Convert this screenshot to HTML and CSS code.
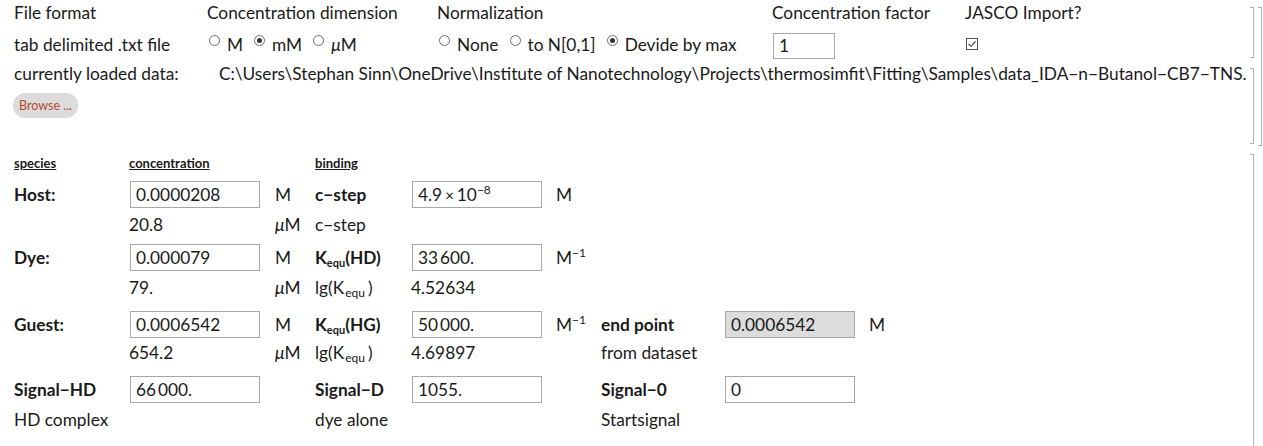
FILE: index.html
```html
<!DOCTYPE html>
<html>
<head>
<meta charset="utf-8">
<link rel="stylesheet" href="styles.css">
</head>
<body>
<div class="page">
  <div class="group">
    <div class="cell cell-a">
      <div class="top-grid">
        <div class="hdr">File format</div>
        <div class="hdr">Concentration dimension</div>
        <div class="hdr">Normalization</div>
        <div class="hdr">Concentration factor</div>
        <div class="hdr">JASCO Import?</div>

        <div class="ctl">tab delimited .txt file</div>
        <div class="ctl radios">
          <span class="radio"></span><span class="rlabel">M</span>
          <span class="radio on"></span><span class="rlabel">mM</span>
          <span class="radio"></span><span class="rlabel"><i>μ</i>M</span>
        </div>
        <div class="ctl radios">
          <span class="radio"></span><span class="rlabel">None</span>
          <span class="radio"></span><span class="rlabel">to N[0,1]</span>
          <span class="radio on"></span><span class="rlabel">Devide by max</span>
        </div>
        <div class="ctl"><span class="field small">1</span></div>
        <div class="ctl">
          <svg class="check" width="12" height="12" viewBox="0 0 12 12"><rect x="0.5" y="0.5" width="11" height="11" fill="#fff" stroke="#555"/><polyline points="2.5,6 5,8.3 9.5,3.5" fill="none" stroke="#444" stroke-width="1.1"/></svg>
        </div>
      </div>
    </div>
    <div class="cell cell-b">
      <div class="path-row">
        <span class="path-label">currently loaded data:</span>
        <span class="path">C:\Users\Stephan Sinn\OneDrive\Institute of Nanotechnology\Projects\thermosimfit\Fitting\Samples\data_IDA−n−Butanol−CB7−TNS.txt</span>
      </div>
      <div class="browse">Browse ...</div>
    </div>
  </div>

  <div class="cell cell-c">
    <div class="grid">
      <div class="colhead">species</div>
      <div class="colhead">concentration</div>
      <div></div>
      <div class="colhead">binding</div>
      <div></div><div></div><div></div><div></div><div></div>

      <div class="b">Host:</div>
      <div><span class="field">0.0000208</span></div>
      <div>M</div>
      <div class="b">c−step</div>
      <div><span class="field">4.9<span class="times">×</span>10<sup>−8</sup></span></div>
      <div>M</div>
      <div></div><div></div><div></div>

      <div></div>
      <div>20.8</div>
      <div><i>μ</i>M</div>
      <div>c−step</div>
      <div></div><div></div><div></div><div></div><div></div>

      <div class="b">Dye:</div>
      <div><span class="field">0.000079</span></div>
      <div>M</div>
      <div class="b">K<sub>equ</sub>(HD)</div>
      <div><span class="field">33<span class="thin"></span>600.</span></div>
      <div>M<sup>−1</sup></div>
      <div></div><div></div><div></div>

      <div></div>
      <div>79.</div>
      <div><i>μ</i>M</div>
      <div>lg(K<sub class="sp">equ</sub>)</div>
      <div>4.52634</div>
      <div></div><div></div><div></div><div></div>

      <div class="b">Guest:</div>
      <div><span class="field">0.0006542</span></div>
      <div>M</div>
      <div class="b">K<sub>equ</sub>(HG)</div>
      <div><span class="field">50<span class="thin"></span>000.</span></div>
      <div>M<sup>−1</sup></div>
      <div class="b">end point</div>
      <div><span class="field disabled">0.0006542</span></div>
      <div>M</div>

      <div></div>
      <div>654.2</div>
      <div><i>μ</i>M</div>
      <div>lg(K<sub class="sp">equ</sub>)</div>
      <div>4.69897</div>
      <div></div>
      <div>from dataset</div>
      <div></div><div></div>

      <div class="b">Signal−HD</div>
      <div><span class="field">66<span class="thin"></span>000.</span></div>
      <div></div>
      <div class="b">Signal−D</div>
      <div><span class="field">1055.</span></div>
      <div></div>
      <div class="b">Signal−0</div>
      <div><span class="field">0</span></div>
      <div></div>

      <div>HD complex</div>
      <div></div><div></div>
      <div>dye alone</div>
      <div></div><div></div>
      <div>Startsignal</div>
      <div></div><div></div>
    </div>
  </div>
</div>
</body>
</html>
```

FILE: styles.css
```css
html, body {
  margin: 0;
  padding: 0;
  background: #fff;
}
body {
  font-family: Lato, "Open Sans", sans-serif;
  font-size: 17.3px;
  color: #1a1a1a;
  width: 1263px;
  height: 446px;
  overflow: hidden;
}
.page {
  position: relative;
}
.group {
  position: relative;
}
.group::after {
  content: "";
  position: absolute;
  right: 1px;
  top: 7px;
  bottom: 1px;
  width: 3px;
  border: 1px solid #b4b4b4;
  border-left: none;
}
.cell {
  position: relative;
  padding-left: 14px;
}
.cell::after {
  content: "";
  position: absolute;
  right: 9px;
  width: 3px;
  border: 1px solid #b4b4b4;
  border-left: none;
}
.cell-a { height: 60px; }
.cell-a::after { top: 7px; bottom: 2px; }
.cell-b { height: 87px; }
.cell-b::after { top: 8px; bottom: 3px; }
.cell-c { padding-top: 7px; }
.cell-c::after { top: 7px; bottom: -20px; }

.top-grid {
  display: grid;
  grid-template-columns: 193px 230px 335px 193px 200px;
  grid-template-rows: 29px 31px;
}
.hdr {
  line-height: 26px;
}
.ctl {
  line-height: 30px;
  display: flex;
  align-items: center;
}
.radios .radio {
  box-sizing: border-box;
  width: 11px;
  height: 11px;
  border: 1px solid #6a6a6a;
  border-radius: 50%;
  margin: 0 7px 0 2px;
  position: relative;
  top: -4px;
  flex: none;
}
.radios .radio.on::after {
  content: "";
  position: absolute;
  left: 2px;
  top: 2px;
  width: 5px;
  height: 5px;
  border-radius: 50%;
  background: #333;
}
.radios .rlabel {
  margin-right: 9px;
}
.field {
  display: block;
  box-sizing: border-box;
  width: 130px;
  height: 27px;
  border: 1px solid #a8a8a8;
  background: #fff;
  padding-left: 5px;
  line-height: 25px;
  white-space: nowrap;
}
.field.small {
  width: 62px;
  height: 26px;
  margin-left: 1px;
  margin-top: 2px;
  line-height: 24px;
}
.field.disabled {
  background: #dcdcdc;
}
.check {
  margin-left: 1px;
  margin-top: -2px;
  display: block;
}

.path-row {
  display: flex;
  line-height: 28px;
  white-space: nowrap;
}
.path-label {
  width: 205px;
  flex: none;
}
.path {
  width: 1027px;
  overflow: hidden;
}
.browse {
  display: inline-block;
  margin-top: 5px;
  margin-left: -1px;
  height: 25px;
  line-height: 25px;
  padding: 0 6px;
  border-radius: 12px;
  background: #dcdcdc;
  color: #b44a2c;
  font-size: 12.5px;
}

.grid {
  display: grid;
  grid-template-columns: 115px 146px 40px 96px 145px 45px 123px 145px 60px;
  grid-template-rows: 27px 30px 33px 30px 37px 28px 37px 30px 28px;
  line-height: 28px;
  align-items: start;
  white-space: nowrap;
}
.grid > div > .field {
  margin-left: 1px;
}
.colhead {
  font-size: 13px;
  font-weight: bold;
  text-decoration: underline;
  line-height: 18px;
}
.b {
  font-weight: bold;
}
sub {
  font-size: 11px;
  vertical-align: -3px;
  line-height: 0;
}
sub.sp {
  font-size: 12px;
  margin: 0 3px 0 1px;
}
sup {
  font-size: 12px;
  vertical-align: 7px;
  line-height: 0;
}
.times {
  margin: 0 3px;
  font-size: 15px;
}
.thin {
  display: inline-block;
  width: 2px;
}
```
